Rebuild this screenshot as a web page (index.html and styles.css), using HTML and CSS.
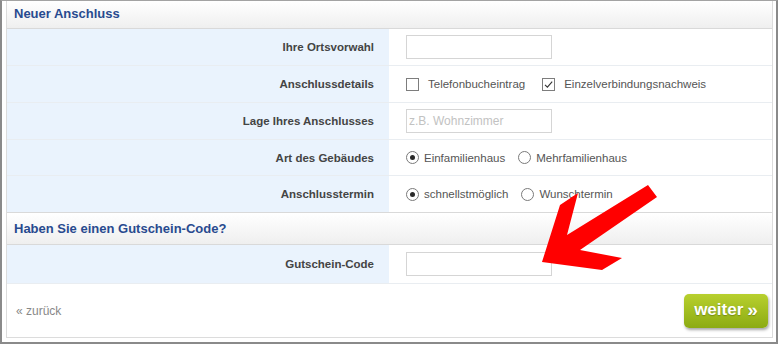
FILE: index.html
```html
<!DOCTYPE html>
<html lang="de">
<head>
<meta charset="utf-8">
<title>Neuer Anschluss</title>
<link rel="stylesheet" href="styles.css">
</head>
<body>
<div class="frame">
  <div class="panel">
    <div class="head head-first">Neuer Anschluss</div>
    <div class="row h37">
      <div class="label">Ihre Ortsvorwahl</div>
      <div class="field"><input class="text" type="text"></div>
    </div>
    <div class="row h37">
      <div class="label">Anschlussdetails</div>
      <div class="field">
        <span class="opt"><span class="cb"></span><span class="otext">Telefonbucheintrag</span></span>
        <span class="opt"><span class="cb"><svg viewBox="0 0 11 11" width="11" height="11"><path d="M2 5.8 L4.4 8.2 L9.2 2.6" fill="none" stroke="#333" stroke-width="1.1"/></svg></span><span class="otext">Einzelverbindungsnachweis</span></span>
      </div>
    </div>
    <div class="row h37">
      <div class="label">Lage Ihres Anschlusses</div>
      <div class="field"><input class="text" type="text" placeholder="z.B. Wohnzimmer"></div>
    </div>
    <div class="row h36">
      <div class="label">Art des Gebäudes</div>
      <div class="field">
        <span class="opt"><span class="rb on"></span><span class="rtext">Einfamilienhaus</span></span>
        <span class="opt"><span class="rb"></span><span class="rtext">Mehrfamilienhaus</span></span>
      </div>
    </div>
    <div class="row h36 last">
      <div class="label">Anschlusstermin</div>
      <div class="field">
        <span class="opt"><span class="rb on"></span><span class="rtext">schnellstmöglich</span></span>
        <span class="opt opt-wide"><span class="rb"></span><span class="rtext">Wunschtermin</span></span>
      </div>
    </div>
    <div class="head head-second">Haben Sie einen Gutschein-Code?</div>
    <div class="row h39">
      <div class="label">Gutschein-Code</div>
      <div class="field"><input class="text" type="text"></div>
    </div>
    <div class="footer">
      <a class="back" href="#">« zurück</a>
      <a class="btn" href="#">weiter <span class="raquo">»</span></a>
    </div>
  </div>
  <svg class="arrow" viewBox="540 183 120 90" width="120" height="90">
    <polygon points="542,262 560,205 578,193 567,235 648,185 657,197 580,250 622,258 602,270" fill="#ff0000"/>
  </svg>
</div>
</body>
</html>
```
FILE: styles.css
```css
* { box-sizing: border-box; }
html, body { margin: 0; padding: 0; background: #fff; }
body { font-family: "Liberation Sans", Arial, sans-serif; }

.frame {
  position: relative;
  width: 778px;
  height: 344px;
  border: 2px solid #8a8a8a;
  border-top: 1px solid #a3a3a3;
  padding: 0 3px 4px 4px;
  background: #fff;
}

.panel {
  height: 100%;
  border: 1px solid #dcdcdc;
  border-top: none;
  display: flex;
  flex-direction: column;
}

.head {
  background: linear-gradient(#ffffff, #efefef);
  color: #284a8f;
  font-weight: bold;
  font-size: 13px;
  padding-left: 7px;
  display: flex;
  align-items: center;
  border-bottom: 1px solid #d9d9d9;
}
.head-first { height: 28px; padding-bottom: 3px; }
.head-second { height: 33px; border-top: 1px solid #d9d9d9; }

.row {
  display: flex;
  border-bottom: 1px solid #e9edf1;
}
.row.last { border-bottom: none; }
.h37 { height: 37px; }
.h36 { height: 36px; }
.h39 { height: 39px; }

.label {
  width: 382px;
  flex: none;
  background: #eaf3fd;
  text-align: right;
  padding-right: 15px;
  font-weight: bold;
  font-size: 11.5px;
  color: #444;
  display: flex;
  align-items: center;
  justify-content: flex-end;
}

.field {
  flex: 1;
  padding-left: 17px;
  display: flex;
  align-items: center;
  font-size: 11.5px;
  color: #555;
}

.text {
  width: 146px;
  height: 24px;
  border: 1px solid #d5d5d5;
  border-radius: 0;
  padding: 0 2px;
  font-family: "Liberation Sans", Arial, sans-serif;
  font-size: 12px;
  color: #555;
  background: #fff;
  outline: none;
}
.text::placeholder { color: #c2c2c2; }

.opt { display: flex; align-items: center; margin-right: 17px; }
.opt:last-child { margin-right: 0; }

.cb {
  width: 13px;
  height: 13px;
  border: 1px solid #7d7d7d;
  background: #fff;
  display: flex;
  align-items: center;
  justify-content: center;
  margin-right: 9px;
}
.cb svg { display: block; }

.rb {
  width: 13px;
  height: 13px;
  border: 1px solid #7a7a7a;
  border-radius: 50%;
  background: #fff;
  display: flex;
  align-items: center;
  justify-content: center;
  margin-right: 5px;
}
.rb.on::after {
  content: "";
  width: 5px;
  height: 5px;
  border-radius: 50%;
  background: #2a2a2a;
}
.field .opt:has(.rb) { margin-right: 13px; }
.field .opt:has(.rb):last-child { margin-right: 0; }

.footer {
  flex: 1;
  display: flex;
  align-items: center;
  justify-content: space-between;
  padding: 0 4px 0 9px;
}

.back {
  color: #888;
  font-size: 12px;
  text-decoration: none;
}

.btn {
  width: 84px;
  height: 34px;
  border-radius: 5px;
  background: linear-gradient(#b8d02e, #8cab13);
  color: #fff;
  font-weight: bold;
  font-size: 17px;
  text-decoration: none;
  display: flex;
  align-items: center;
  justify-content: center;
  text-shadow: 0 1px 1px rgba(0,0,0,0.25);
  box-shadow: 1px 2px 3px rgba(0,0,0,0.35);
  padding-bottom: 2px;
}
.raquo { font-size: 19px; margin-left: 4px; }

.arrow {
  position: absolute;
  left: 538px;
  top: 182px;
}
```
